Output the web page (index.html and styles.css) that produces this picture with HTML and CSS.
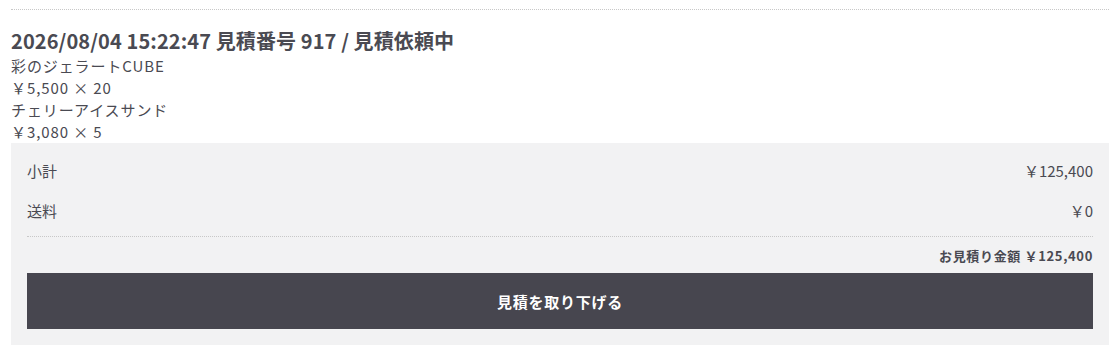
FILE: index.html
```html
<!DOCTYPE html>
<html lang="ja">
<head>
<meta charset="utf-8">
<link rel="stylesheet" href="styles.css">
</head>
<body>
<div class="wrap">
  <div class="quote">
    <h2 class="quote-title">2026/08/04 15:22:47 見積番号 917 / 見積依頼中</h2>
    <ul class="items">
      <li>彩のジェラートCUBE</li>
      <li>￥5,500 × 20</li>
      <li>チェリーアイスサンド</li>
      <li>￥3,080 × 5</li>
    </ul>
    <div class="summary">
      <div class="row"><span>小計</span><span>￥125,400</span></div>
      <div class="row"><span>送料</span><span>￥0</span></div>
      <div class="total">お見積り金額 ￥125,400</div>
      <button class="btn">見積を取り下げる</button>
    </div>
  </div>
</div>
</body>
</html>
```
FILE: styles.css
```css
html, body {
  margin: 0;
  padding: 0;
  background: #fff;
}
body {
  font-family: "Noto Sans CJK JP", "Noto Sans", sans-serif;
  color: #4a4a52;
}
.wrap {
  padding: 9px 11px 0;
}
.quote {
  border-top: 1px dotted #c8c8c8;
  padding-top: 15.5px;
}
.quote-title {
  margin: 0;
  font-size: 20px;
  font-weight: 700;
  line-height: 29px;
  letter-spacing: 0.1px;
  color: #4a4a52;
}
.items {
  list-style: none;
  margin: 0 0 0.5px;
  padding: 0;
  font-size: 15px;
  line-height: 22px;
  letter-spacing: 0.9px;
}
.summary {
  background: #f2f2f3;
  padding: 7px 16px 16px;
  font-size: 15px;
}
.row {
  display: flex;
  justify-content: space-between;
  align-items: center;
  height: 40px;
}
.row + .total {
  margin-top: 6px;
}
.total {
  border-top: 1px dotted #c8c8c8;
  height: 36px;
  display: flex;
  align-items: center;
  justify-content: flex-end;
  font-size: 13px;
  font-weight: 700;
  letter-spacing: 0.05em;
}
.btn {
  display: block;
  width: 100%;
  height: 56px;
  border: 0;
  background: #47464f;
  color: #fff;
  font-family: inherit;
  font-size: 15px;
  font-weight: 700;
  letter-spacing: 0.05em;
  cursor: pointer;
}
```
